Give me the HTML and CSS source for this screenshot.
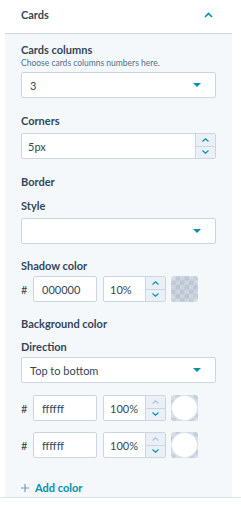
FILE: index.html
```html
<!DOCTYPE html>
<html lang="en">
<head>
    <meta charset="UTF-8">
    <meta name="viewport" content="width=device-width, initial-scale=1.0">
    <title>Cards settings</title>
    <link rel="stylesheet" href="styles.css">
</head>
<body>
    <div class="section">
        <div class="section-header">
            <span class="section-title">Cards</span>
            <svg class="chevron-up" width="9" height="6" viewBox="0 0 9 6"><path d="M1 5 L4.5 1.5 L8 5" fill="none" stroke="#0091ae" stroke-width="1.6"/></svg>
        </div>

        <div class="section-body">
            <div class="field">
                <div class="label label-tight">Cards columns</div>
                <div class="help">Choose cards columns numbers here.</div>
                <div class="select">
                    <span>3</span>
                    <span class="caret"></span>
                </div>
            </div>

            <div class="field">
                <div class="label">Corners</div>
                <div class="number">
                    <span class="number-value">5px</span>
                    <div class="spinner">
                        <span class="spin up"><svg width="7" height="4" viewBox="0 0 7 4"><path d="M0.5 3.5 L3.5 0.8 L6.5 3.5" fill="none" stroke="#0091ae" stroke-width="1.1"/></svg></span>
                        <span class="spin down"><svg width="7" height="4" viewBox="0 0 7 4"><path d="M0.5 0.5 L3.5 3.2 L6.5 0.5" fill="none" stroke="#0091ae" stroke-width="1.1"/></svg></span>
                    </div>
                </div>
            </div>

            <div class="group-title">Border</div>

            <div class="field field-wide">
                <div class="label">Style</div>
                <div class="select">
                    <span></span>
                    <span class="caret"></span>
                </div>
            </div>

            <div class="field field-wide">
                <div class="label label-short">Shadow color</div>
                <div class="color-row">
                    <span class="hash">#</span>
                    <div class="hex">000000</div>
                    <div class="percent">
                        <span class="number-value">10%</span>
                        <div class="spinner">
                            <span class="spin up"><svg width="7" height="4" viewBox="0 0 7 4"><path d="M0.5 3.5 L3.5 0.8 L6.5 3.5" fill="none" stroke="#0091ae" stroke-width="1.1"/></svg></span>
                            <span class="spin down"><svg width="7" height="4" viewBox="0 0 7 4"><path d="M0.5 0.5 L3.5 3.2 L6.5 0.5" fill="none" stroke="#0091ae" stroke-width="1.1"/></svg></span>
                        </div>
                    </div>
                    <div class="swatch"><span class="swatch-dot dot-shadow"></span></div>
                </div>
            </div>

            <div class="group-title group-title-near">Background color</div>

            <div class="field field-near">
                <div class="label label-short">Direction</div>
                <div class="select">
                    <span>Top to bottom</span>
                    <span class="caret"></span>
                </div>
            </div>

            <div class="color-row stop">
                <span class="hash">#</span>
                <div class="hex">ffffff</div>
                <div class="percent">
                    <span class="number-value">100%</span>
                    <div class="spinner">
                        <span class="spin up"><svg width="7" height="4" viewBox="0 0 7 4"><path d="M0.5 3.5 L3.5 0.8 L6.5 3.5" fill="none" stroke="#b0c1d4" stroke-width="1.1"/></svg></span>
                        <span class="spin down"><svg width="7" height="4" viewBox="0 0 7 4"><path d="M0.5 0.5 L3.5 3.2 L6.5 0.5" fill="none" stroke="#0091ae" stroke-width="1.1"/></svg></span>
                    </div>
                </div>
                <div class="swatch"><span class="swatch-dot dot-white"></span></div>
            </div>

            <div class="color-row stop">
                <span class="hash">#</span>
                <div class="hex">ffffff</div>
                <div class="percent">
                    <span class="number-value">100%</span>
                    <div class="spinner">
                        <span class="spin up"><svg width="7" height="4" viewBox="0 0 7 4"><path d="M0.5 3.5 L3.5 0.8 L6.5 3.5" fill="none" stroke="#b0c1d4" stroke-width="1.1"/></svg></span>
                        <span class="spin down"><svg width="7" height="4" viewBox="0 0 7 4"><path d="M0.5 0.5 L3.5 3.2 L6.5 0.5" fill="none" stroke="#0091ae" stroke-width="1.1"/></svg></span>
                    </div>
                </div>
                <div class="swatch"><span class="swatch-dot dot-white"></span></div>
            </div>

            <div class="add-color">
                <svg width="8" height="8" viewBox="0 0 8 8"><path d="M4 0 V8 M0 4 H8" stroke="#7c98b6" stroke-width="1.2"/></svg>
                <span>Add color</span>
            </div>
        </div>
    </div>
    <div class="footer-line"></div>
</body>
</html>
```

FILE: styles.css
```css
* {
    box-sizing: border-box;
}

body {
    margin: 0;
    background: #ffffff;
    font-family: Lato, "Noto Sans", sans-serif;
    color: #33475b;
}

.section {
    margin-left: 5px;
    width: 227px;
}

.section-header {
    height: 34px;
    display: flex;
    align-items: center;
    justify-content: space-between;
    padding: 0 19px 4px 16px;
    border-bottom: 1px solid #cbd6e2;
}

.section-title {
    font-size: 11px;
    font-weight: 700;
}

.section-body {
    background: #f5f8fa;
    padding: 9px 16px 0 16px;
    height: 463px;
}

.footer-line {
    height: 1px;
    background: #dfe3eb;
}

.field {
    margin-bottom: 16px;
}

.field-wide {
    margin-bottom: 15px;
}

.field-near {
    margin-bottom: 12px;
}

.label {
    font-size: 11px;
    font-weight: 700;
    line-height: 14px;
    margin-bottom: 5px;
}

.label-tight {
    margin-bottom: 0;
}

.label-short {
    margin-bottom: 3px;
}

.help {
    font-size: 8.5px;
    color: #516f90;
    line-height: 12px;
    margin-bottom: 3px;
}

.group-title {
    font-size: 11px;
    font-weight: 700;
    line-height: 14px;
    margin-bottom: 10px;
}

.group-title-near {
    margin-bottom: 9px;
}

.select {
    height: 26px;
    background: #ffffff;
    border: 1px solid #cbd6e2;
    border-radius: 2px;
    display: flex;
    align-items: center;
    justify-content: space-between;
    padding: 0 14px 0 8px;
    font-size: 11px;
}

.caret {
    width: 0;
    height: 0;
    border-left: 4px solid transparent;
    border-right: 4px solid transparent;
    border-top: 4px solid #0091ae;
}

.number {
    height: 26px;
    background: #ffffff;
    border: 1px solid #cbd6e2;
    border-radius: 2px;
    display: flex;
    align-items: stretch;
    font-size: 11px;
}

.number-value {
    flex: 1;
    display: flex;
    align-items: center;
    padding-left: 6px;
}

.spinner {
    width: 20px;
    display: flex;
    flex-direction: column;
    border-left: 1px solid #cbd6e2;
}

.spin {
    flex: 1;
    background: #eaf0f6;
    display: flex;
    align-items: center;
    justify-content: center;
}

.spin.up {
    border-bottom: 1px solid #cbd6e2;
}

.color-row {
    display: flex;
    align-items: center;
    height: 26px;
}

.color-row.stop {
    margin-bottom: 11px;
}

.hash {
    width: 12px;
    font-size: 11px;
}

.hex {
    width: 64px;
    height: 26px;
    background: #ffffff;
    border: 1px solid #cbd6e2;
    border-radius: 2px;
    display: flex;
    align-items: center;
    padding-left: 8px;
    font-size: 11px;
    margin-right: 6px;
}

.percent {
    width: 63px;
    height: 26px;
    background: #ffffff;
    border: 1px solid #cbd6e2;
    border-radius: 2px;
    display: flex;
    align-items: stretch;
    font-size: 11px;
    margin-right: 5px;
}

.swatch {
    width: 27px;
    height: 26px;
    border-radius: 3px;
    background-color: #d6dee8;
    background-image:
        linear-gradient(45deg, #c3ceda 25%, transparent 25%, transparent 75%, #c3ceda 75%),
        linear-gradient(45deg, #c3ceda 25%, transparent 25%, transparent 75%, #c3ceda 75%);
    background-size: 9px 9px;
    background-position: 0 0, 4.5px 4.5px;
    position: relative;
}

.swatch-dot {
    position: absolute;
    left: 0;
    top: 0;
    width: 27px;
    height: 26px;
    border-radius: 50%;
    border: 1px solid #dfe3eb;
}

.dot-shadow {
    background: rgba(0, 0, 0, 0.04);
    border-color: rgba(203, 214, 226, 0.4);
}

.dot-white {
    background: #ffffff;
}

.add-color {
    display: flex;
    align-items: center;
    gap: 6px;
    margin-top: 23px;
    line-height: 14px;
    font-size: 11px;
    font-weight: 700;
    color: #0091ae;
}
```
